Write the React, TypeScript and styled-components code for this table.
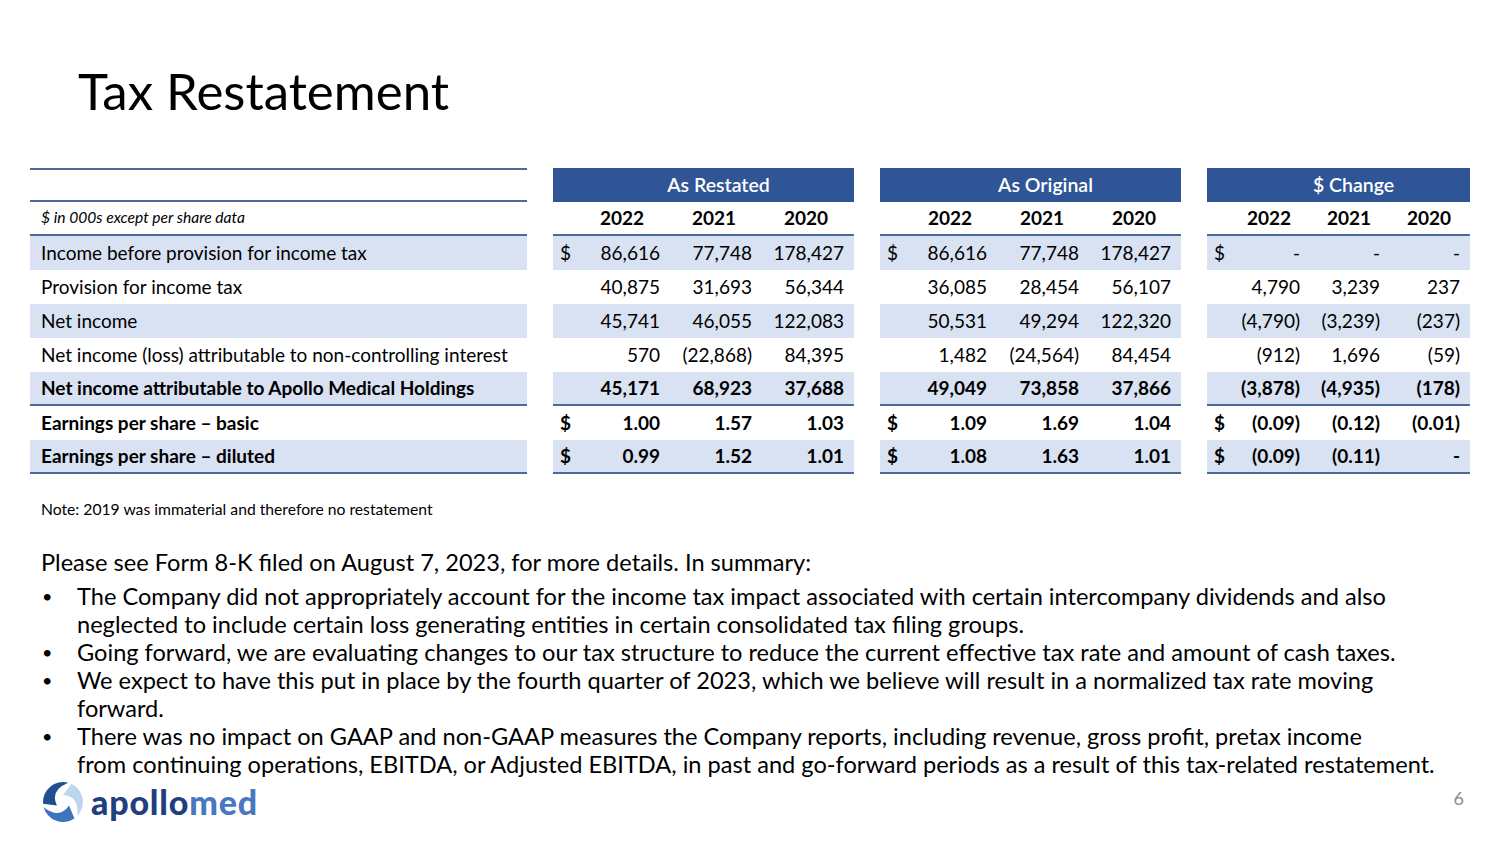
import styled, { createGlobalStyle } from 'styled-components';

const GlobalStyle = createGlobalStyle`
  html, body {
    margin: 0;
    padding: 0;
    background: #ffffff;
  }
  body {
    font-family: Lato, "Open Sans", "Liberation Sans", sans-serif;
    color: #000000;
  }
`;

const RULE = '#4d6b99';
const BAND = '#d9e2f3';
const HEAD = '#2f5597';

type Cells = [string, string, string, string];

interface RowData {
    label: string;
    shaded?: boolean;
    bold?: boolean;
    ruled?: boolean;
    restated: Cells;
    original: Cells;
    change: Cells;
}

const rows: RowData[] = [
    { label: 'Income before provision for income tax', shaded: true,
      restated: ['$', '86,616', '77,748', '178,427'], original: ['$', '86,616', '77,748', '178,427'], change: ['$', '-', '-', '-'] },
    { label: 'Provision for income tax',
      restated: ['', '40,875', '31,693', '56,344'], original: ['', '36,085', '28,454', '56,107'], change: ['', '4,790', '3,239', '237'] },
    { label: 'Net income', shaded: true,
      restated: ['', '45,741', '46,055', '122,083'], original: ['', '50,531', '49,294', '122,320'], change: ['', '(4,790)', '(3,239)', '(237)'] },
    { label: 'Net income (loss) attributable to non-controlling interest',
      restated: ['', '570', '(22,868)', '84,395'], original: ['', '1,482', '(24,564)', '84,454'], change: ['', '(912)', '1,696', '(59)'] },
    { label: 'Net income attributable to Apollo Medical Holdings', shaded: true, bold: true, ruled: true,
      restated: ['', '45,171', '68,923', '37,688'], original: ['', '49,049', '73,858', '37,866'], change: ['', '(3,878)', '(4,935)', '(178)'] },
    { label: 'Earnings per share \u2013 basic', bold: true,
      restated: ['$', '1.00', '1.57', '1.03'], original: ['$', '1.09', '1.69', '1.04'], change: ['$', '(0.09)', '(0.12)', '(0.01)'] },
    { label: 'Earnings per share \u2013 diluted', shaded: true, bold: true, ruled: true,
      restated: ['$', '0.99', '1.52', '1.01'], original: ['$', '1.08', '1.63', '1.01'], change: ['$', '(0.09)', '(0.11)', '-'] },
];

const years = ['2022', '2021', '2020'];

// one blade of the pinwheel mark, head on the left, tail running over the top
const BLADE = 'M -19.9 1.7 A 20 20 0 0 1 5.2 -19.3 Q -13.4 -11.7 -6.1 3.5 Z';

const Logo = () => (
    <LogoWrap>
        <svg width="44" height="44" viewBox="-22 -22 44 44">
            <path d={BLADE} fill="#1f4f8f" />
            <path d={BLADE} fill="#bcd6f0" transform="rotate(120)" />
            <path d={BLADE} fill="#3d75bd" transform="rotate(240)" />
        </svg>
        <LogoText><span>apollo</span><em>med</em></LogoText>
    </LogoWrap>
);

const Group = ({ cells }: { cells: Cells }) => (
    <>
        {cells.map((c, i) => <Num key={i} $sign={i === 0}>{c}</Num>)}
    </>
);

const App = () => {
    return (
        <Page>
            <GlobalStyle />
            <Title>Tax Restatement</Title>

            <Table>
                <Row>
                    <LabelCell $top $bottom />
                    <GroupHead>As Restated</GroupHead>
                    <GroupHead>As Original</GroupHead>
                    <GroupHead>$ Change</GroupHead>
                </Row>
                <Row>
                    <LabelCell $bottom><Units>$ in 000s except per share data</Units></LabelCell>
                    <ValueCell $bottom $cols={92}><span />{years.map(y => <Year key={y} $pad={16}>{y}</Year>)}</ValueCell>
                    <ValueCell $bottom $cols={92}><span />{years.map(y => <Year key={y} $pad={15}>{y}</Year>)}</ValueCell>
                    <ValueCell $bottom $cols={80}><span />{years.map(y => <Year key={y} $pad={9}>{y}</Year>)}</ValueCell>
                </Row>
                {rows.map(r => (
                    <Row key={r.label} $bold={r.bold}>
                        <LabelCell $shaded={r.shaded} $bottom={r.ruled}>{r.label}</LabelCell>
                        <ValueCell $shaded={r.shaded} $bottom={r.ruled} $cols={92}><Group cells={r.restated} /></ValueCell>
                        <ValueCell $shaded={r.shaded} $bottom={r.ruled} $cols={92}><Group cells={r.original} /></ValueCell>
                        <ValueCell $shaded={r.shaded} $bottom={r.ruled} $cols={80}><Group cells={r.change} /></ValueCell>
                    </Row>
                ))}
            </Table>

            <Note>Note: 2019 was immaterial and therefore no restatement</Note>

            <Summary>Please see Form 8-K filed on August 7, 2023, for more details. In summary:</Summary>
            <Bullets>
                <li>The Company did not appropriately account for the income tax impact associated with certain intercompany dividends and also<br />neglected to include certain loss generating entities in certain consolidated tax filing groups.</li>
                <li>Going forward, we are evaluating changes to our tax structure to reduce the current effective tax rate and amount of cash taxes.</li>
                <li>We expect to have this put in place by the fourth quarter of 2023, which we believe will result in a normalized tax rate moving<br />forward.</li>
                <li>There was no impact on GAAP and non-GAAP measures the Company reports, including revenue, gross profit, pretax income<br />from continuing operations, EBITDA, or Adjusted EBITDA, in past and go-forward periods as a result of this tax-related restatement.</li>
            </Bullets>

            <Footer>
                <Logo />
                <PageNum>6</PageNum>
            </Footer>
        </Page>
    );
};

const Page = styled.div`
    width: 1500px;
    height: 844px;
    box-sizing: border-box;
    padding: 60px 0 0 0;
    display: flex;
    flex-direction: column;
    overflow: hidden;
    background: #fff;
`;

const Title = styled.h1`
    margin: 0 0 0 78px;
    font-size: 51px;
    font-weight: 400;
    line-height: 1.2;
    color: #000;
`;

const Table = styled.div`
    margin: 47px 0 0 30px;
    display: flex;
    flex-direction: column;
`;

const Row = styled.div<{ $bold?: boolean }>`
    display: grid;
    grid-template-columns: 497px 301px 301px 263px;
    column-gap: 26px;
    height: 34px;
    font-size: 19px;
    font-weight: ${p => (p.$bold ? 700 : 400)};
`;

const LabelCell = styled.div<{ $shaded?: boolean; $top?: boolean; $bottom?: boolean }>`
    box-sizing: border-box;
    display: flex;
    align-items: center;
    padding: 0 0 2px 11px;
    background: ${p => (p.$shaded ? BAND : 'transparent')};
    border-top: ${p => (p.$top ? `2px solid ${RULE}` : 'none')};
    border-bottom: ${p => (p.$bottom ? `2px solid ${RULE}` : 'none')};
    white-space: nowrap;
`;

const Units = styled.span`
    font-size: 15.6px;
    font-style: italic;
`;

const GroupHead = styled.div`
    background: ${HEAD};
    color: #fff;
    font-size: 19.5px;
    font-weight: 600;
    display: flex;
    align-items: center;
    justify-content: center;
    padding: 0 0 1px 30px;
`;

const ValueCell = styled.div<{ $shaded?: boolean; $bottom?: boolean; $cols: number }>`
    box-sizing: border-box;
    display: grid;
    grid-template-columns: minmax(0, 1fr) repeat(3, ${p => p.$cols}px);
    align-items: center;
    padding: 0 10px 2px 7px;
    background: ${p => (p.$shaded ? BAND : 'transparent')};
    border-bottom: ${p => (p.$bottom ? `2px solid ${RULE}` : 'none')};
    white-space: nowrap;
`;

const Num = styled.span<{ $sign?: boolean }>`
    text-align: ${p => (p.$sign ? 'left' : 'right')};
`;

const Year = styled.span<{ $pad: number }>`
    text-align: right;
    font-weight: 700;
    padding-right: ${p => p.$pad}px;
`;

const Note = styled.div`
    margin: 26px 0 0 41px;
    font-size: 15.7px;
    line-height: 18px;
`;

const Summary = styled.div`
    margin: 30px 0 0 41px;
    font-size: 23.6px;
    line-height: 28px;
`;

const Bullets = styled.ul`
    margin: 6px 0 0 41px;
    padding: 0;
    list-style: none;
    font-size: 23.6px;
    line-height: 28px;
    white-space: nowrap;

    & li {
        position: relative;
        padding-left: 36px;
    }
    & li::before {
        content: '\u2022';
        position: absolute;
        left: 1px;
        top: 0;
        font-size: 18px;
    }
`;

const Footer = styled.div`
    margin-top: 2px;
    display: flex;
    justify-content: space-between;
    align-items: center;
    padding: 0 36px 0 41px;
`;

const LogoWrap = styled.div`
    display: flex;
    align-items: center;
    gap: 6px;
`;

const LogoText = styled.div`
    font-family: Lato, "Liberation Sans", sans-serif;
    font-size: 34px;
    font-weight: 900;
    letter-spacing: 0.8px;
    line-height: 1;
    color: #1f3f7f;
    & em {
        font-style: normal;
        color: #4a78bf;
    }
`;

const PageNum = styled.div`
    font-size: 18px;
    color: #8c8c8c;
    margin-top: -8px;
`;

export default App;
